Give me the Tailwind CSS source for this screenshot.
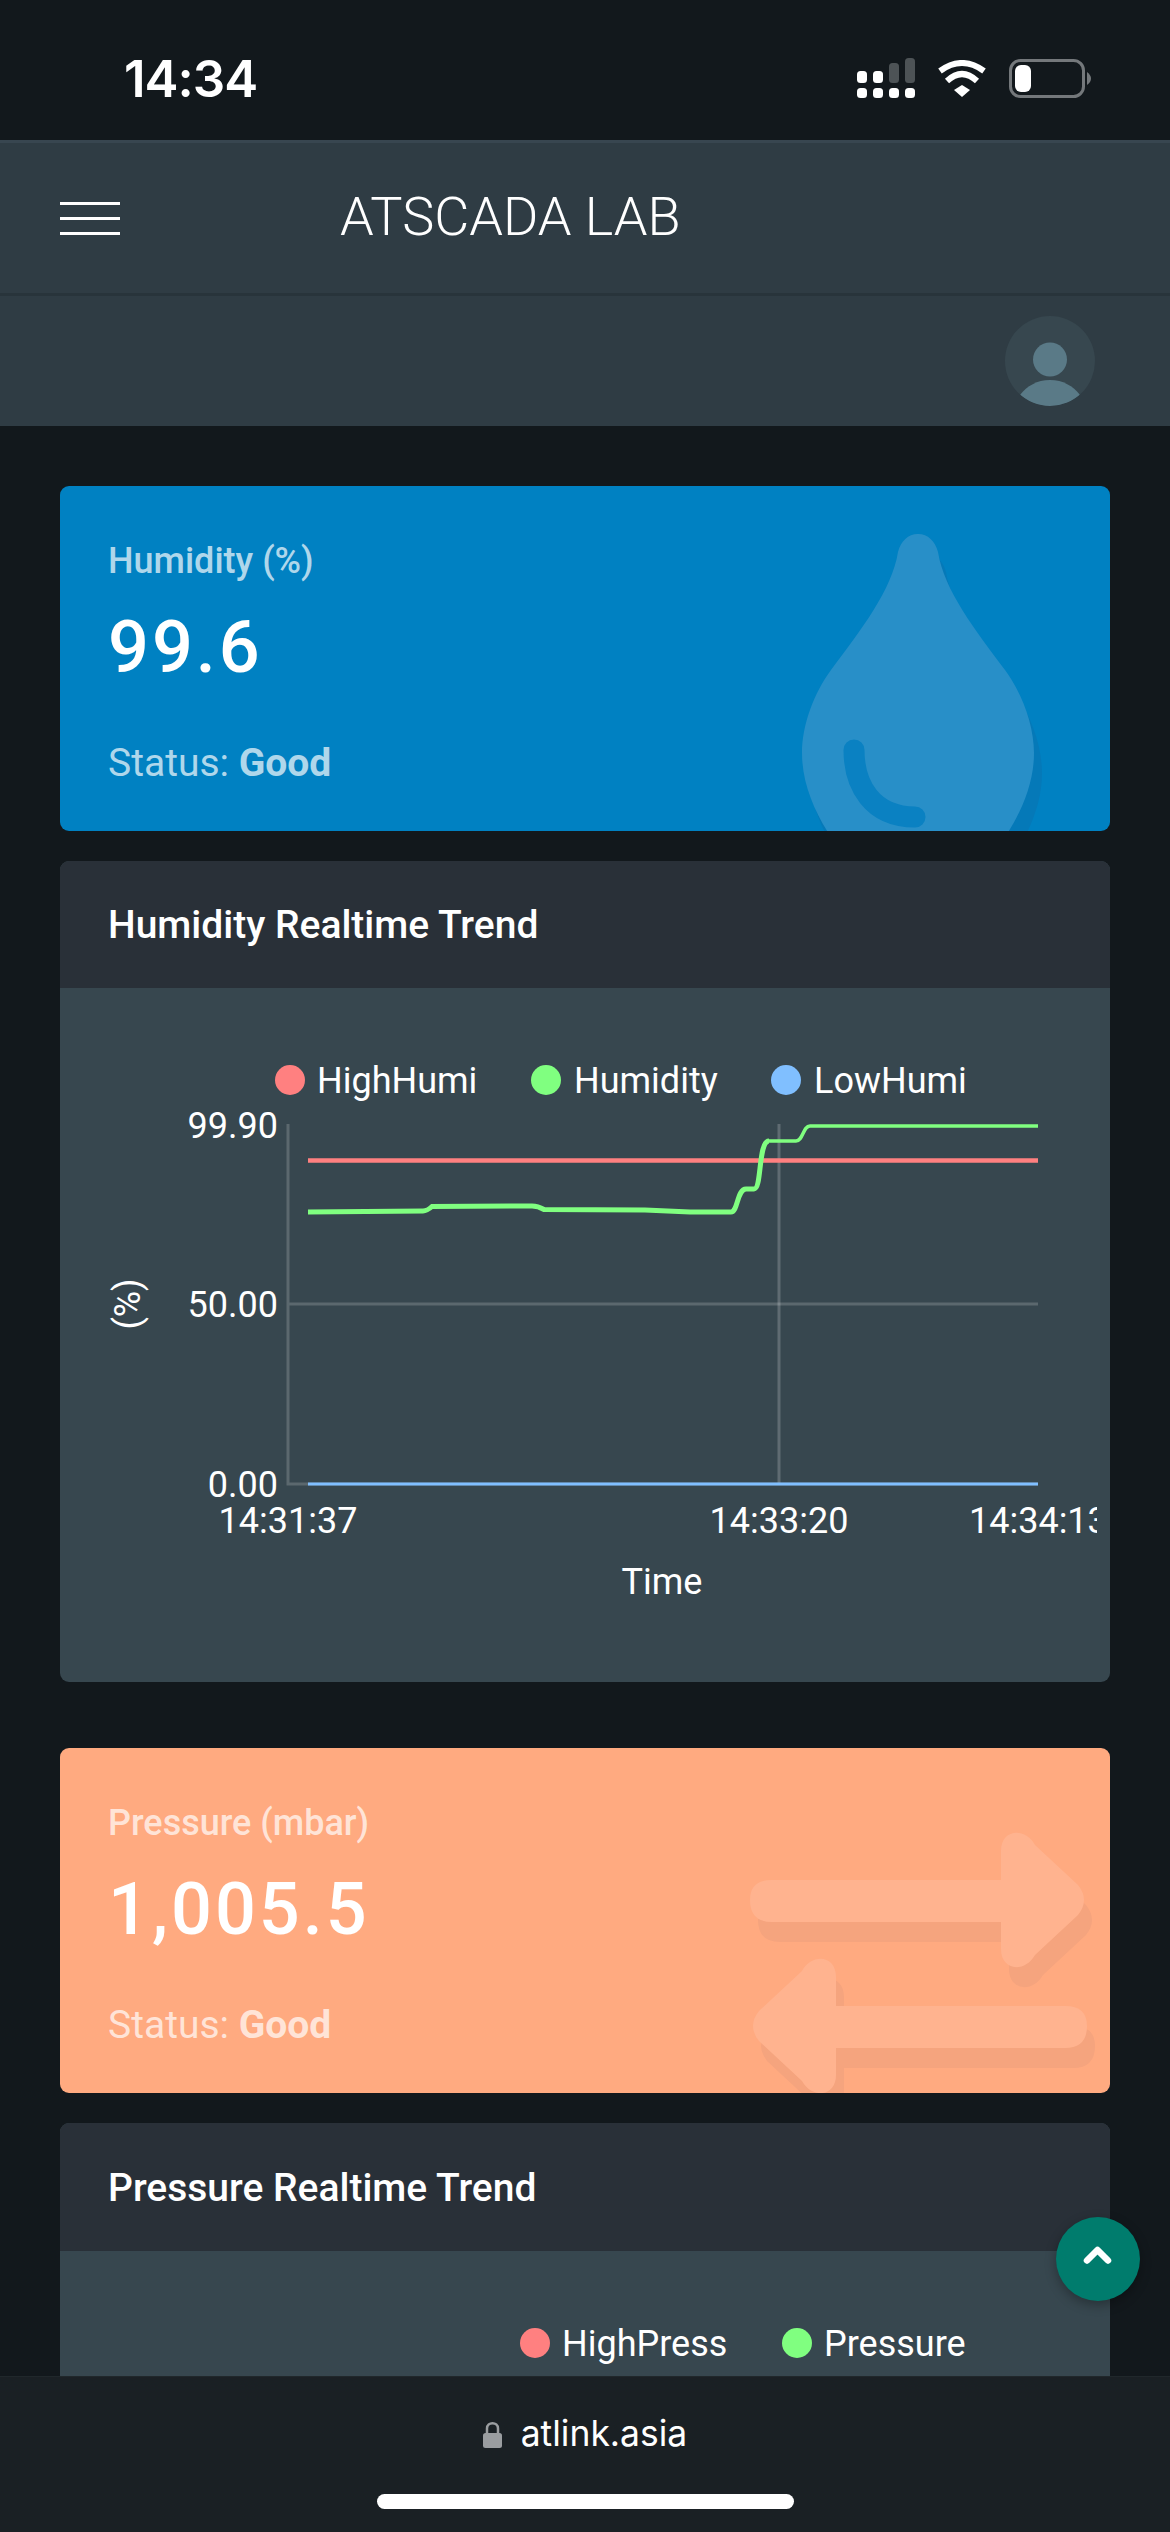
<!DOCTYPE html>
<html lang="en">
<head>
<meta charset="utf-8">
<title>ATSCADA LAB</title>
<script src="https://cdn.jsdelivr.net/npm/@tailwindcss/browser@4"></script>
</head>
<body class="bg-[#12181d]">
<div class="relative flex h-[2532px] w-[1170px] flex-col overflow-hidden bg-[#12181c] font-[Roboto,sans-serif] text-white">

  <!-- status bar -->
  <div class="flex h-[140px] shrink-0 items-center justify-between pt-[16px] pl-[124px] pr-[79px]">
    <span class="font-[Inter,sans-serif] text-[51px] leading-none font-semibold tracking-[-1px]">14:34</span>
    <div class="flex items-center gap-[22px]">
      <svg width="58" height="40" viewBox="0 0 58 40">
        <rect x="0" y="13" width="10" height="12" rx="3.5" fill="#fff"/>
        <rect x="16" y="13" width="10" height="12" rx="3.5" fill="#fff"/>
        <rect x="32" y="5" width="10" height="20" rx="3.5" fill="#4d5356"/>
        <rect x="48" y="0" width="10" height="25" rx="3.5" fill="#4d5356"/>
        <rect x="0" y="30" width="10" height="10" rx="3.5" fill="#fff"/>
        <rect x="16" y="30" width="10" height="10" rx="3.5" fill="#fff"/>
        <rect x="32" y="30" width="10" height="10" rx="3.5" fill="#fff"/>
        <rect x="48" y="30" width="10" height="10" rx="3.5" fill="#fff"/>
      </svg>
      <svg width="50" height="37" viewBox="0 0 50 37">
        <path d="M3 11 Q25 -5 47 11" fill="none" stroke="#fff" stroke-width="6"/>
        <path d="M10 21 Q25 7 40 21" fill="none" stroke="#fff" stroke-width="6"/>
        <path d="M17 30 L25 25 L33 30 L25 37 Z" fill="#fff"/>
      </svg>
      <svg width="82" height="39" viewBox="0 0 82 39">
        <rect x="1.5" y="1.5" width="73" height="36" rx="10" fill="none" stroke="#74787b" stroke-width="3"/>
        <rect x="6" y="6" width="16" height="27" rx="6" fill="#fff"/>
        <path d="M78 13 Q82 16 82 19.5 Q82 23 78 26 Z" fill="#74787b"/>
      </svg>
    </div>
  </div>

  <!-- app bar -->
  <header class="flex h-[153px] shrink-0 items-center gap-[220px] border-t-[3px] border-[#384650] bg-[#2f3c44] pl-[60px]">
    <div class="flex w-[60px] flex-col gap-[12px]">
      <span class="block h-[3px] bg-white"></span>
      <span class="block h-[3px] bg-white"></span>
      <span class="block h-[3px] bg-white"></span>
    </div>
    <span class="-mt-[3px] text-[54px] leading-none font-light">ATSCADA LAB</span>
  </header>
  <div class="flex h-[133px] shrink-0 items-center justify-end border-t-[3px] border-[#28343b] bg-[#2f3c44] pr-[75px]">
    <div class="h-[90px] w-[90px] overflow-hidden rounded-full bg-[#37474f]">
      <svg width="90" height="90" viewBox="0 0 90 90">
        <circle cx="45" cy="43.5" r="17" fill="#5a7a87"/>
        <path d="M15 79 C22 70 32 64 45 64 C58 64 68 70 75 79 A45 45 0 0 1 15 79 Z" fill="#5a7a87"/>
      </svg>
    </div>
  </div>

  <!-- content -->
  <main class="flex min-h-0 flex-1 flex-col overflow-hidden px-[60px] pt-[60px]">
    <!-- humidity stat -->
    <section class="relative h-[345px] shrink-0 overflow-hidden rounded-[9px] bg-[#0081c2]">
      <svg class="absolute inset-0" width="1050" height="345" viewBox="60 486 1050 345">
        <defs>
          <path id="drop" d="M918 534 C928 534 935 541 938 552 C944 590 975 630 1005 670 C1022 693 1034 725 1034 753 C1034 785 1020 815 1003 840 L833 840 C816 815 802 785 802 753 C802 725 814 693 831 670 C861 630 892 590 898 552 C901 541 908 534 918 534 Z"/>
        </defs>
        <use href="#drop" x="8" y="20" fill="#0579b8"/>
        <use href="#drop" fill="#288fc8"/>
        <path d="M854 750 C854 785 872 817 915 817" fill="none" stroke="#0a81c2" stroke-width="21" stroke-linecap="round"/>
      </svg>
      <div class="relative flex h-full flex-col pl-[48px]">
        <div class="mt-[57px] text-[36px] leading-[36px] font-medium text-white/70">Humidity (%)</div>
        <div class="mt-[33px] text-[72px] leading-[72px] font-medium tracking-[3px]">99.6</div>
        <div class="mt-[60px] text-[39px] leading-[39px] text-white/70">Status: <b class="font-bold">Good</b></div>
      </div>
    </section>

    <!-- humidity trend -->
    <section class="mt-[30px] h-[821px] shrink-0 overflow-hidden rounded-[9px] bg-[#37474f]">
      <h2 class="flex h-[127px] items-center bg-[#293038] pt-[2px] pl-[48px] text-[39px] font-medium">Humidity Realtime Trend</h2>
      <svg width="1037" height="694" viewBox="60 988 1037 694" fill="#fff" font-size="36">
        <circle cx="290" cy="1080" r="15" fill="#ff8080"/>
        <text x="317" y="1093">HighHumi</text>
        <circle cx="546" cy="1080" r="15" fill="#80ff80"/>
        <text x="574" y="1093">Humidity</text>
        <circle cx="786" cy="1080" r="15" fill="#80bfff"/>
        <text x="814" y="1093">LowHumi</text>

        <path d="M288 1124 V1484 H1038 M288 1304 H1038" fill="none" stroke="#fff" stroke-opacity="0.18" stroke-width="3"/>
        <path d="M779 1124 V1484" fill="none" stroke="#fff" stroke-opacity="0.2" stroke-width="3"/>
        <path d="M308 1160.5 H1038" fill="none" stroke="#ff8080" stroke-width="4.5"/>
        <path d="M308 1484 H1038" fill="none" stroke="#80bfff" stroke-width="3"/>
        <path d="M308 1212 L423 1211 Q427 1211 432 1206.5 L532 1206 Q538 1206 544 1209.5 L645 1210 L690 1212 L731 1212 C738 1212 737 1189 746 1189 L754 1189 C762 1189 758 1141 769 1141" fill="none" stroke="#80ff80" stroke-width="5"/>
        <path d="M769 1141 L796 1141 C803 1141 803 1126 810 1126 L1038 1126" fill="none" stroke="#80ff80" stroke-width="3.5"/>

        <text x="278" y="1138" text-anchor="end">99.90</text>
        <text x="278" y="1317" text-anchor="end">50.00</text>
        <text x="278" y="1497" text-anchor="end">0.00</text>
        <text x="288" y="1533" text-anchor="middle">14:31:37</text>
        <text x="779" y="1533" text-anchor="middle">14:33:20</text>
        <text x="969" y="1533">14:34:13</text>
        <text x="662" y="1594" text-anchor="middle">Time</text>
        <text x="0" y="0" text-anchor="middle" transform="translate(140 1304) rotate(-90)">(%)</text>
      </svg>
    </section>

    <!-- pressure stat -->
    <section class="relative mt-[66px] h-[345px] shrink-0 overflow-hidden rounded-[9px] bg-[#ffaa80]">
      <svg class="absolute inset-0" width="1050" height="345" viewBox="60 1748 1050 345">
        <defs>
          <path id="arrow" d="M772 1880 H1001 V1851 C1001 1829 1025 1827 1035 1845 L1078 1885 Q1090 1900 1078 1915 L1035 1955 C1025 1973 1001 1971 1001 1949 V1922 H772 Q750 1922 750 1900 Q750 1880 772 1880 Z"/>
        </defs>
        <use href="#arrow" x="8" y="20" fill="#f5a47e"/>
        <use href="#arrow" transform="translate(1845 146) scale(-1 1)" fill="#f5a47e"/>
        <use href="#arrow" fill="#ffb38f"/>
        <use href="#arrow" transform="translate(1837 126) scale(-1 1)" fill="#ffb38f"/>
      </svg>
      <div class="relative flex h-full flex-col pl-[48px]">
        <div class="mt-[57px] text-[36px] leading-[36px] font-medium text-white/70">Pressure (mbar)</div>
        <div class="mt-[33px] text-[72px] leading-[72px] font-medium tracking-[3px]">1,005.5</div>
        <div class="mt-[60px] text-[39px] leading-[39px] text-white/70">Status: <b class="font-bold">Good</b></div>
      </div>
    </section>

    <!-- pressure trend -->
    <section class="mt-[30px] shrink-0 rounded-t-[9px] bg-[#37474f]">
      <h2 class="flex h-[128px] items-center rounded-t-[9px] bg-[#293038] pt-[2px] pl-[48px] text-[39px] font-medium">Pressure Realtime Trend</h2>
      <svg class="block" width="1050" height="300" viewBox="60 2251 1050 300" fill="#fff" font-size="36">
        <circle cx="535" cy="2343" r="15" fill="#ff8080"/>
        <text x="562" y="2356">HighPress</text>
        <circle cx="797" cy="2343" r="15" fill="#80ff80"/>
        <text x="824" y="2356">Pressure</text>
      </svg>
    </section>
  </main>

  <!-- browser chrome -->
  <footer class="flex h-[156px] shrink-0 flex-col items-center border-t border-[#20272b] bg-[#1a2024] pt-[37px]">
    <div class="flex h-[40px] items-center gap-[19px]">
      <svg width="19" height="27" viewBox="0 0 19 27">
        <path d="M4 13 V7.5 C4 0.5 15 0.5 15 7.5 V13" fill="none" stroke="#9a9da0" stroke-width="2.5"/>
        <rect x="0" y="12" width="19" height="15" rx="2.5" fill="#9a9da0"/>
      </svg>
      <span class="font-[Inter,sans-serif] text-[35.5px] leading-none">atlink.asia</span>
    </div>
    <div class="mt-[40px] h-[15px] w-[417px] rounded-full bg-white"></div>
  </footer>

  <!-- back to top -->
  <button class="absolute top-[2217px] right-[30px] flex h-[84px] w-[84px] items-center justify-center rounded-full bg-[#007c6d] shadow-[0_4px_12px_rgba(0,0,0,0.3)]">
    <svg width="84" height="84" viewBox="0 0 84 84">
      <path d="M31 43.5 L41.5 33 L52 43.5" fill="none" stroke="#fff" stroke-width="6.5" stroke-linecap="round" stroke-linejoin="round"/>
    </svg>
  </button>
</div>
</body>
</html>
